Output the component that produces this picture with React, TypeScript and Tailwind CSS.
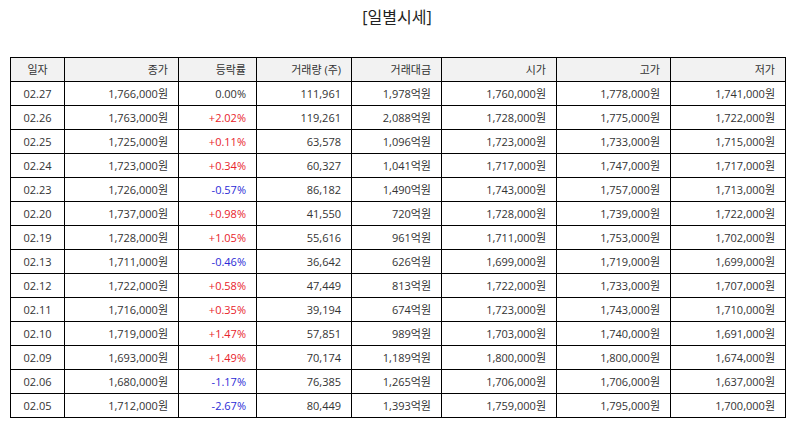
import React from "react";

const rows: [string, string, string, string, string, string, string, string][] = [
  ["02.27", "1,766,000원", "0.00%", "111,961", "1,978억원", "1,760,000원", "1,778,000원", "1,741,000원"],
  ["02.26", "1,763,000원", "+2.02%", "119,261", "2,088억원", "1,728,000원", "1,775,000원", "1,722,000원"],
  ["02.25", "1,725,000원", "+0.11%", "63,578", "1,096억원", "1,723,000원", "1,733,000원", "1,715,000원"],
  ["02.24", "1,723,000원", "+0.34%", "60,327", "1,041억원", "1,717,000원", "1,747,000원", "1,717,000원"],
  ["02.23", "1,726,000원", "-0.57%", "86,182", "1,490억원", "1,743,000원", "1,757,000원", "1,713,000원"],
  ["02.20", "1,737,000원", "+0.98%", "41,550", "720억원", "1,728,000원", "1,739,000원", "1,722,000원"],
  ["02.19", "1,728,000원", "+1.05%", "55,616", "961억원", "1,711,000원", "1,753,000원", "1,702,000원"],
  ["02.13", "1,711,000원", "-0.46%", "36,642", "626억원", "1,699,000원", "1,719,000원", "1,699,000원"],
  ["02.12", "1,722,000원", "+0.58%", "47,449", "813억원", "1,722,000원", "1,733,000원", "1,707,000원"],
  ["02.11", "1,716,000원", "+0.35%", "39,194", "674억원", "1,723,000원", "1,743,000원", "1,710,000원"],
  ["02.10", "1,719,000원", "+1.47%", "57,851", "989억원", "1,703,000원", "1,740,000원", "1,691,000원"],
  ["02.09", "1,693,000원", "+1.49%", "70,174", "1,189억원", "1,800,000원", "1,800,000원", "1,674,000원"],
  ["02.06", "1,680,000원", "-1.17%", "76,385", "1,265억원", "1,706,000원", "1,706,000원", "1,637,000원"],
  ["02.05", "1,712,000원", "-2.67%", "80,449", "1,393억원", "1,759,000원", "1,795,000원", "1,700,000원"],
];

const headers = ["일자", "종가", "등락률", "거래량 (주)", "거래대금", "시가", "고가", "저가"];

export default function App() {
  return (
    <div
      className="w-[794px] h-[425px] bg-white text-[#222]"
      style={{ fontFamily: '"Open Sans", "Noto Sans CJK KR", sans-serif' }}
    >
      <div className="h-[57px] pt-[4px] text-center text-[16px] leading-[26px]">[일별시세]</div>
      <table className="ml-[10px] w-[775px] border-collapse table-fixed text-[11px] text-[#333]">
        <colgroup>
          <col className="w-[54px]" />
          <col className="w-[114px]" />
          <col className="w-[78px]" />
          <col className="w-[95px]" />
          <col className="w-[90px]" />
          <col className="w-[115px]" />
          <col className="w-[114px]" />
          <col className="w-[115px]" />
        </colgroup>
        <thead>
          <tr className="h-[24px] bg-[#f2f2f2]">
            {headers.map((h, i) => (
              <th
                key={h}
                className={`border-[1.5px] border-black font-normal px-[10px] leading-[21px] ${i === 0 ? "text-center" : "text-right"}`}
              >
                {h}
              </th>
            ))}
          </tr>
        </thead>
        <tbody>
          {rows.map((r) => (
            <tr key={r[0]} className="h-[24px]">
              {r.map((c, i) => {
                let color = "";
                if (i === 2) {
                  if (c.startsWith("+")) color = "text-[#e8232b]";
                  else if (c.startsWith("-")) color = "text-[#2b2bd6]";
                }
                return (
                  <td
                    key={i}
                    className={`border-[1.5px] border-black px-[10px] leading-[21px] ${i === 0 ? "text-center" : "text-right"} ${color}`}
                  >
                    {c}
                  </td>
                );
              })}
            </tr>
          ))}
        </tbody>
      </table>
    </div>
  );
}
